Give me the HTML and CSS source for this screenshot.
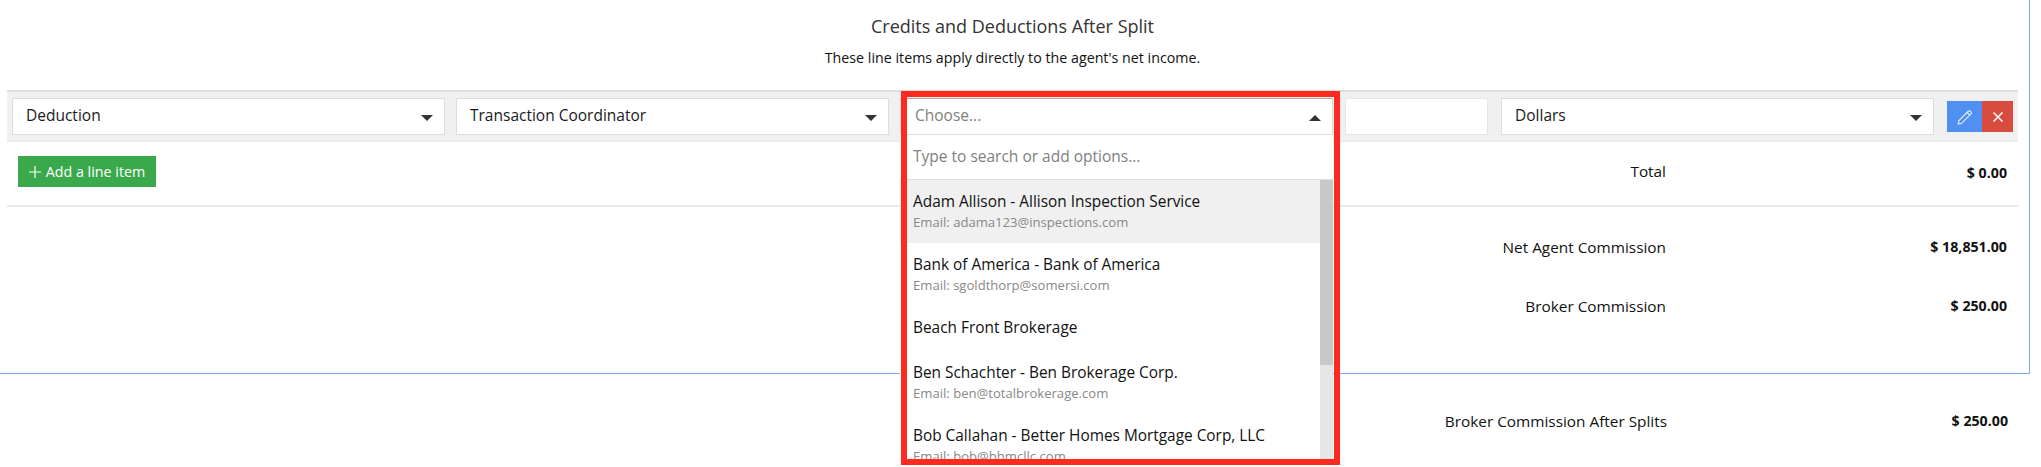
FILE: index.html
```html
<!DOCTYPE html>
<html lang="en">
<head>
<meta charset="utf-8">
<title>Credits and Deductions After Split</title>
<link rel="stylesheet" href="styles.css">
</head>
<body>
<main class="page">
  <section class="card">
    <h2 class="title">Credits and Deductions After Split</h2>
    <p class="subtitle">These line items apply directly to the agent's net income.</p>

    <div class="line-row">
      <div class="select"><span>Deduction</span><i class="caret"></i></div>
      <div class="select"><span>Transaction Coordinator</span><i class="caret"></i></div>
      <div class="select select-open">
        <span class="placeholder">Choose...</span><i class="caret caret-up"></i>
        <div class="dropdown">
          <div class="search">Type to search or add options...</div>
          <div class="options">
            <ul class="option-list">
              <li class="option option-active"><b>Adam Allison - Allison Inspection Service</b><small>Email: adama123@inspections.com</small></li>
              <li class="option"><b>Bank of America - Bank of America</b><small>Email: sgoldthorp@somersi.com</small></li>
              <li class="option option-single"><b>Beach Front Brokerage</b></li>
              <li class="option"><b>Ben Schachter - Ben Brokerage Corp.</b><small>Email: ben@totalbrokerage.com</small></li>
              <li class="option"><b>Bob Callahan - Better Homes Mortgage Corp, LLC</b><small>Email: bob@bhmcllc.com</small></li>
            </ul>
            <div class="scrollbar"><div class="thumb"></div></div>
          </div>
        </div>
      </div>
      <div class="amount"></div>
      <div class="select select-unit"><span>Dollars</span><i class="caret"></i></div>
      <div class="actions">
        <button class="btn-edit" type="button" aria-label="Edit">
          <svg viewBox="0 0 16 16" width="18" height="18" fill="none" stroke="#e8f0ff" stroke-width="1"><path d="M2.6 11.2 10.9 2.9a1.3 1.3 0 0 1 1.9 0l.5.5a1.3 1.3 0 0 1 0 1.9L5 13.6 2 14.2z"/><path d="M9.9 3.9l2.4 2.4"/></svg>
        </button>
        <button class="btn-del" type="button" aria-label="Remove">
          <svg viewBox="0 0 12 12" width="12" height="12" fill="none" stroke="#fff" stroke-width="1.5"><path d="M1.5 1.5l9 9M10.5 1.5l-9 9"/></svg>
        </button>
      </div>
    </div>

    <div class="total-row">
      <button class="btn-add" type="button">
        <svg viewBox="0 0 12 12" width="12" height="12" fill="none" stroke="#fff" stroke-width="1.2"><path d="M6 0v12M0 6h12"/></svg>
        Add a line item
      </button>
      <div class="sum sum-total"><span class="label">Total</span><strong class="value">$ 0.00</strong></div>
    </div>

    <div class="summary">
      <div class="sum"><span class="label">Net Agent Commission</span><strong class="value">$ 18,851.00</strong></div>
      <div class="sum sum-broker"><span class="label">Broker Commission</span><strong class="value">$ 250.00</strong></div>
    </div>
  </section>

  <div class="sum sum-after"><span class="label">Broker Commission After Splits</span><strong class="value">$ 250.00</strong></div>
</main>
<div class="highlight"></div>
</body>
</html>
```
FILE: styles.css
```css
* { box-sizing: border-box; }
html, body { margin: 0; height: 467px; overflow: hidden; background: #fff; }
body { font-family: "Open Sans", sans-serif; color: #1a1a1a; position: relative; }

.page { width: 2030px; }

.card {
  height: 374px;
  padding: 15px 11px 0 7px;
  border-right: 1px solid #7ea9e6;
  border-bottom: 1px solid #7ea9e6;
}

.title {
  margin: 0;
  font-size: 18px;
  line-height: 22px;
  font-weight: 400;
  text-align: center;
  color: #333;
}
.subtitle {
  margin: 11px 0 0;
  font-size: 14.25px;
  line-height: 20px;
  text-align: center;
  color: #111;
}

.line-row {
  margin-top: 22px;
  height: 52px;
  display: flex;
  align-items: flex-start;
  gap: 11px;
  padding: 6px 0 0 5px;
  background: #f0f0f0;
  border-top: 2px solid #dedede;
  border-bottom: 1px solid #e9e9e9;
}

.select {
  position: relative;
  flex: none;
  width: 433px;
  height: 37px;
  display: flex;
  align-items: center;
  padding: 0 0 3px 13px;
  background: #fff;
  border: 1px solid #ddd;
  font-size: 15.5px;
}
.select-open { padding-left: 14px; border-top-color: #aaa; }
.select-unit { margin-left: 2px; }
.placeholder { color: #808080; }

.caret {
  position: absolute;
  right: 11px;
  top: 16px;
  width: 0;
  height: 0;
  border-left: 6px solid transparent;
  border-right: 6px solid transparent;
  border-top: 6px solid #333;
}
.caret-up { border-top: 0; border-bottom: 6px solid #333; }

.dropdown {
  position: absolute;
  left: -1px;
  right: -1px;
  top: 36px;
  background: #fff;
  height: 325px;
  overflow: hidden;
  border-bottom: 1px solid #ddd;
}
.search {
  height: 45px;
  padding: 9px 0 0 13px;
  font-size: 15.5px;
  line-height: 24px;
  color: #808080;
  border-bottom: 1px solid #ddd;
}
.options { position: relative; }
.option-list { list-style: none; margin: 0; padding: 0; }
.option {
  height: 63px;
  padding: 11px 0 0 13px;
}
.option b {
  display: block;
  font-weight: 400;
  font-size: 15.4px;
  line-height: 22px;
  color: #111;
}
.option small {
  display: block;
  font-size: 13.1px;
  line-height: 18px;
  color: #888;
}
.option-active { background: #f0f0f0; }
.option-single { height: 45px; }
.scrollbar {
  position: absolute;
  top: 0;
  right: 0;
  bottom: 0;
  width: 13px;
  background: #e6e6e6;
}
.thumb { height: 185px; background: #c8c8c8; }

.amount {
  flex: none;
  width: 143px;
  height: 37px;
  margin-left: 1px;
  background: #fff;
  border: 1px solid #e6e6e6;
}

.actions { display: flex; margin: 3px 0 0 2px; }
.actions button { border: 0; height: 31px; padding: 0; display: flex; align-items: center; justify-content: center; }
.btn-edit { width: 35px; background: #4f90f0; }
.btn-del { width: 31px; background: #d74c3f; }

.total-row {
  height: 65px;
  padding: 14px 0 0 11px;
  display: flex;
  justify-content: space-between;
  align-items: flex-start;
  border-bottom: 2px solid #e6eaef;
}
.btn-add {
  width: 138px;
  height: 31px;
  padding: 0;
  border: 0;
  display: flex;
  align-items: center;
  justify-content: center;
  gap: 5px;
  background: #3aa94c;
  color: #fff;
  font: 400 14.3px "Open Sans", sans-serif;
}

.sum {
  display: flex;
  justify-content: flex-end;
  font-size: 15.35px;
  line-height: 20px;
}
.label { color: #111; }
.value { width: 352px; padding-right: 11px; text-align: right; font-size: 14.2px; font-weight: 700; color: #111; }
.sum-total { padding-top: 5px; }
.sum-total .value { padding-top: 2px; }
.summary { padding-top: 30px; }
.sum-broker { margin-top: 39px; }
.sum-after { margin-top: 37px; padding-right: 11px; }

.highlight {
  position: absolute;
  left: 901px;
  top: 91px;
  width: 439px;
  height: 374px;
  border: 6px solid #ff2a1f;
  pointer-events: none;
}
```
